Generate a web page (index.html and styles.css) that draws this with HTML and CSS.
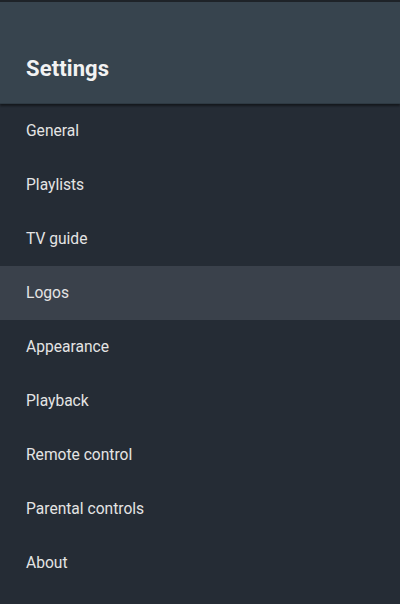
FILE: index.html
```html
<!DOCTYPE html>
<html>
<head>
<meta charset="utf-8">
<link rel="stylesheet" href="styles.css">
</head>
<body>
<div class="app">
  <header class="header"><h1 class="title">Settings</h1></header>
  <ul class="menu">
    <li class="item">General</li>
    <li class="item">Playlists</li>
    <li class="item">TV guide</li>
    <li class="item active">Logos</li>
    <li class="item">Appearance</li>
    <li class="item">Playback</li>
    <li class="item">Remote control</li>
    <li class="item">Parental controls</li>
    <li class="item">About</li>
  </ul>
</div>
</body>
</html>
```
FILE: styles.css
```css
html, body {
  margin: 0;
  padding: 0;
  background: #252c35;
}
.app {
  width: 400px;
  height: 604px;
  overflow: hidden;
  display: flex;
  flex-direction: column;
  font-family: Roboto, "Noto Sans", sans-serif;
  background: #252c35;
  border-top: 2px solid #1e2328;
  box-sizing: border-box;
}
.header {
  height: 102px;
  box-sizing: border-box;
  background: #37444e;
  display: flex;
  align-items: flex-start;
  padding: 54px 26px 0;
  box-shadow: 0 2px 2px rgba(0,0,0,0.45);
  border-bottom: 1px solid #2e3a43;
  position: relative;
  z-index: 1;
  flex-shrink: 0;
}
.title {
  margin: 0;
  font-size: 22px;
  line-height: normal;
  font-weight: 700;
  color: #f2f2f2;
  letter-spacing: 0.1px;
}
.menu {
  list-style: none;
  margin: 0;
  padding: 0;
}
.item {
  height: 54px;
  display: flex;
  align-items: center;
  padding: 0 26px;
  font-size: 15.6px;
  color: #e4e4e4;
}
.item.active {
  background: #3a414b;
}
```
